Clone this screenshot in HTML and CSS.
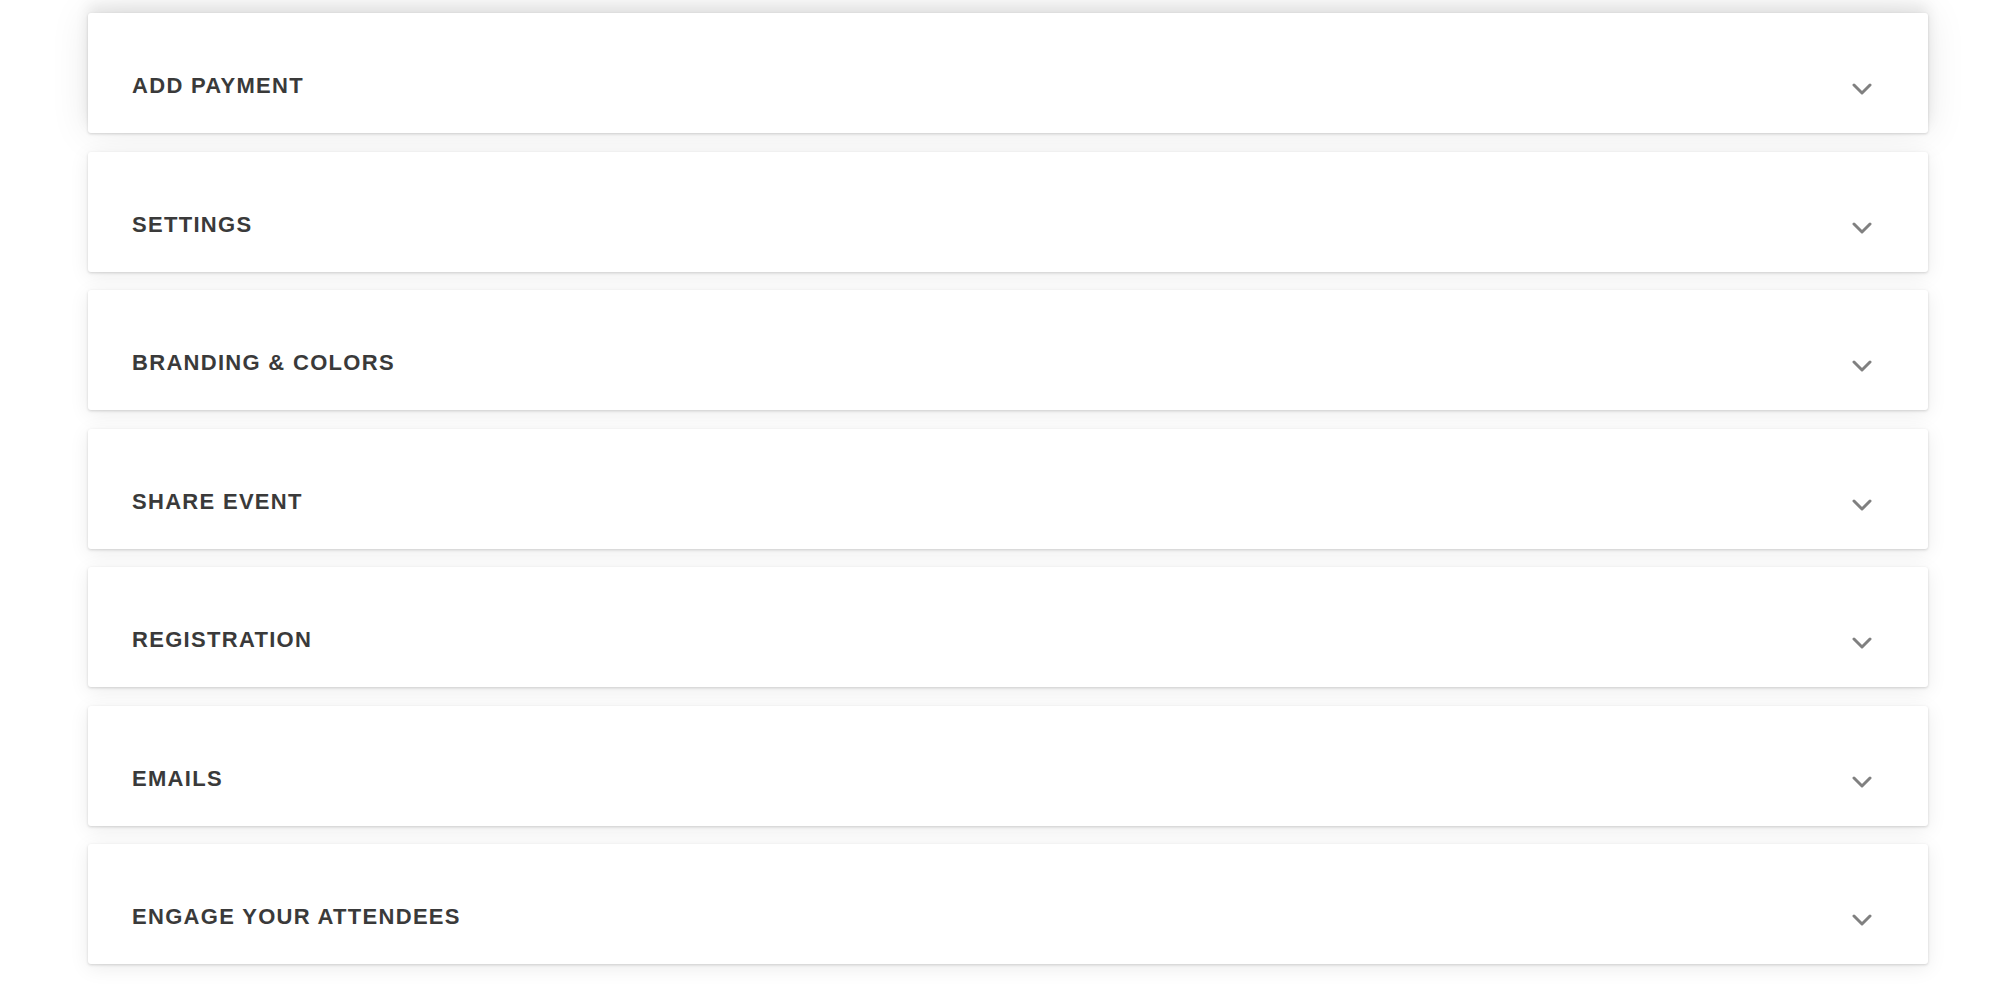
FILE: index.html
```html
<!DOCTYPE html>
<html lang="en">
<head>
    <meta charset="UTF-8">
    <meta name="viewport" content="width=device-width, initial-scale=1.0">
    <title>Event Setup</title>
    <link rel="stylesheet" href="styles.css">
</head>
<body>
    <div class="accordion">
        <div class="panel active">
            <div class="panel-header">
                <h3>Add Payment</h3>
                <svg class="chevron" viewBox="0 0 20 12" width="20" height="12"><path d="M2 2 L10 10 L18 2"/></svg>
            </div>
        </div>
        <div class="panel">
            <div class="panel-header">
                <h3>Settings</h3>
                <svg class="chevron" viewBox="0 0 20 12" width="20" height="12"><path d="M2 2 L10 10 L18 2"/></svg>
            </div>
        </div>
        <div class="panel">
            <div class="panel-header">
                <h3>Branding &amp; Colors</h3>
                <svg class="chevron" viewBox="0 0 20 12" width="20" height="12"><path d="M2 2 L10 10 L18 2"/></svg>
            </div>
        </div>
        <div class="panel">
            <div class="panel-header">
                <h3>Share Event</h3>
                <svg class="chevron" viewBox="0 0 20 12" width="20" height="12"><path d="M2 2 L10 10 L18 2"/></svg>
            </div>
        </div>
        <div class="panel">
            <div class="panel-header">
                <h3>Registration</h3>
                <svg class="chevron" viewBox="0 0 20 12" width="20" height="12"><path d="M2 2 L10 10 L18 2"/></svg>
            </div>
        </div>
        <div class="panel">
            <div class="panel-header">
                <h3>Emails</h3>
                <svg class="chevron" viewBox="0 0 20 12" width="20" height="12"><path d="M2 2 L10 10 L18 2"/></svg>
            </div>
        </div>
        <div class="panel">
            <div class="panel-header">
                <h3>Engage Your Attendees</h3>
                <svg class="chevron" viewBox="0 0 20 12" width="20" height="12"><path d="M2 2 L10 10 L18 2"/></svg>
            </div>
        </div>
    </div>
</body>
</html>
```

FILE: styles.css
```css
body {
    font-family: "Liberation Sans", Arial, sans-serif;
    background-color: #fff;
    margin: 0;
    padding: 0;
}

.accordion {
    width: 1840px;
    margin-left: 88px;
    padding: 13px 0 28px;
    display: flex;
    flex-direction: column;
    gap: 18.5px;
}

.panel {
    background-color: #fff;
    border-radius: 3px;
    height: 120px;
    flex-shrink: 0;
    box-sizing: border-box;
    box-shadow: 0 1px 3px rgba(0, 0, 0, 0.16), 0 4px 20px rgba(0, 0, 0, 0.08);
}

.panel.active {
    box-shadow: 0 1px 3px rgba(0, 0, 0, 0.16), 0 -8px 14px rgba(0, 0, 0, 0.08), 0 0 40px rgba(0, 0, 0, 0.09);
}

.panel-header {
    display: flex;
    align-items: center;
    justify-content: space-between;
    height: 100%;
    box-sizing: border-box;
    padding: 26px 56px 0 44px;
}

.panel-header h3 {
    margin: 0;
    font-size: 22px;
    font-weight: bold;
    letter-spacing: 1.3px;
    text-transform: uppercase;
    color: #3a3a3a;
}

.chevron {
    margin-top: 6px;
    fill: none;
    stroke: #808080;
    stroke-width: 3;
    stroke-linecap: round;
    stroke-linejoin: round;
}
```
